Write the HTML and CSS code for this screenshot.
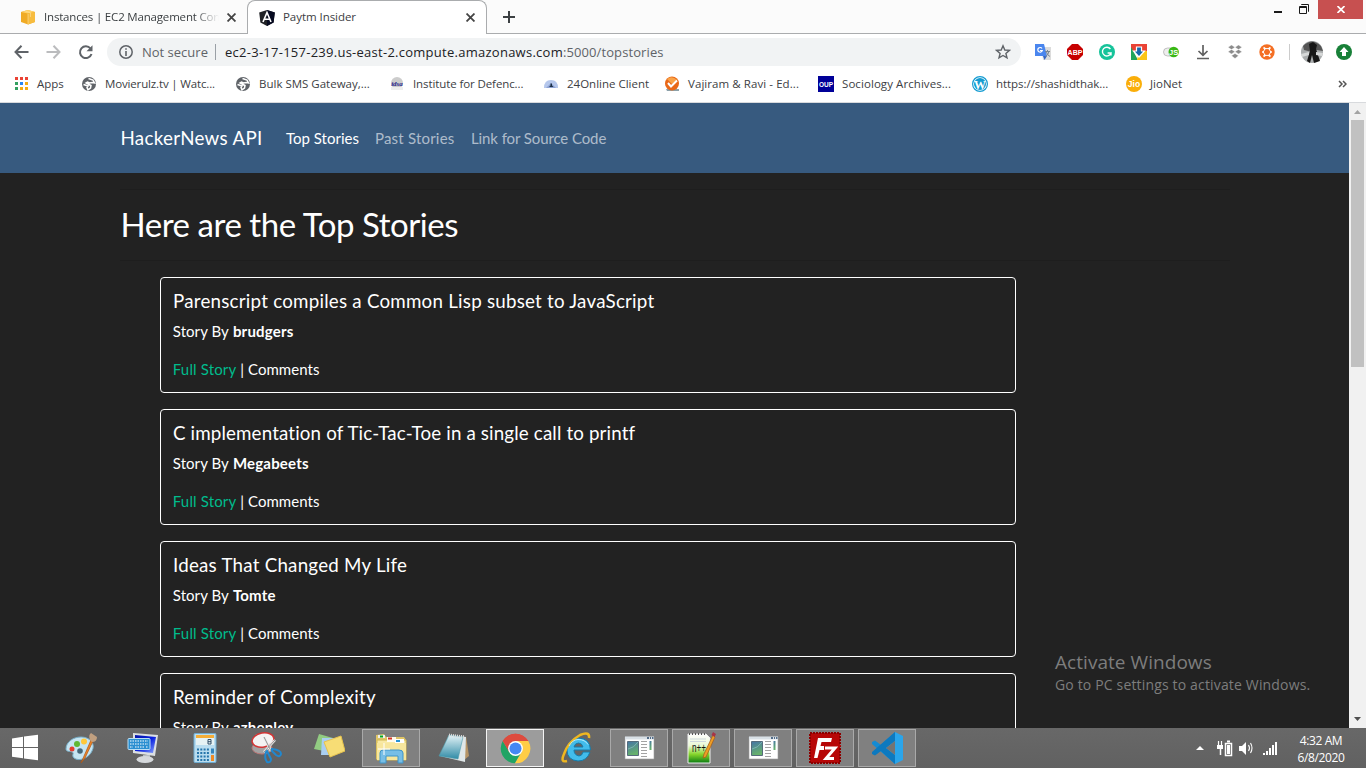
FILE: index.html
```
<!DOCTYPE html>
<html lang="en">
<head>
<meta charset="utf-8">
<title>Paytm Insider</title>
<link rel="stylesheet" href="styles.css">
</head>
<body>
<svg width="0" height="0" class="defs">
  <defs>
    <linearGradient id="pic" x1="0" y1="0" x2="0.3" y2="1"><stop offset="0" stop-color="#4574a6"/><stop offset="1" stop-color="#68b36c"/></linearGradient>
    <linearGradient id="pad" x1="0" y1="0" x2="0" y2="1"><stop offset="0" stop-color="#e4f3f7"/><stop offset="1" stop-color="#2f8ba6"/></linearGradient>
    <linearGradient id="npp" x1="0" y1="0" x2="0" y2="1"><stop offset="0" stop-color="#fff"/><stop offset=".4" stop-color="#eaf9d5"/><stop offset=".7" stop-color="#86d52b"/><stop offset="1" stop-color="#087a11"/></linearGradient>
    <linearGradient id="screen" x1="0" y1="0" x2="1" y2="1"><stop offset="0" stop-color="#0615a8"/><stop offset=".5" stop-color="#0920df"/><stop offset="1" stop-color="#8ba5ff"/></linearGradient>
    <symbol id="globe" viewBox="0 0 16 16"><circle cx="8" cy="8" r="7" fill="#5f6368"/><path d="M7.500 2.500L12 4l1.500 3-2-.5-3 .5-2-1L5 7l3 1.500 2 1-.5 2.500L7 13.800 6 11.500 7 10 2.500 8.500" fill="none" stroke="#fff" stroke-width="1.500"/></symbol>
    <symbol id="window" viewBox="0 0 32 32"><path d="M2 5h29v22H2z" fill="#fff" stroke="#9a9a9a" stroke-width=".6"/><path d="M2 4.500h29v3H2z" fill="#d8e0e6"/><path d="M24 5h2v2h-2zM27 5h1v2h-1zM29 5h1.500v2H29z" fill="#526c88"/><path d="M4.500 9.500h11v14h-11z" fill="url(#pic)" stroke="#566c7c"/><path d="M5 17q6-1 10-7" fill="none" stroke="#8fc0c3" opacity=".7"/><path d="M18 9.500h6m-6 3h6m-6 3h6m-6 3h6m-6 3h6m-6 3h6" stroke="#a3a3a3"/><path d="M26.500 9h2v9h-2z" fill="url(#pic)"/></symbol>
  </defs>
</svg>
<header class="browser">
  <div class="tabs">
    <div class="tab">
      <svg width="16" height="16" viewBox="0 0 16 16"><path d="M1 3l7-2 7 2v10l-7 2.500L1 13z" fill="#f0ab25"/><path d="M1 3l7-2 7 2-7 1.500z" fill="#ffd36b"/><path d="M8 4.500L15 3v10l-7 2.500z" fill="#f7bc3f"/><path d="M5.500 2l5 2v4M8 5v10" stroke="#fde1a0" stroke-width=".6" fill="none"/></svg>
      <span class="tab-title t-ec2">Instances | EC2 Management Con</span>
      <svg class="close" width="9" height="9" viewBox="0 0 8 8"><path d="M.5.5l7 7m0-7l-7 7" stroke="#444" stroke-width="1.600"/></svg>
    </div>
    <div class="tab active">
      <svg width="16" height="16" viewBox="0 0 16 16"><path d="M8 0l7.800 2.500-1.200 10L8 16l-6.600-3.500L.200 2.500z" fill="#202226"/><path d="M8 0l7.800 2.500-1.200 10L8 16z" fill="#060a20"/><path d="M4 12l4-9.500L12 12M5.600 9.300h4.800" stroke="#fff" stroke-width="1.600" fill="none"/></svg>
      <span class="tab-title t-paytm">Paytm Insider</span>
      <svg class="close" width="9" height="9" viewBox="0 0 8 8"><path d="M.5.5l7 7m0-7l-7 7" stroke="#444" stroke-width="1.600"/></svg>
    </div>
    <div class="tab-rest">
      <svg class="plus" width="12" height="12" viewBox="0 0 12 12"><path d="M6 0v12M0 6h12" stroke="#3c4043" stroke-width="2"/></svg>
      <div class="win-controls">
        <svg width="48" height="20" viewBox="0 0 48 20"><path d="M2 11h8v2H2z" fill="#1a1a1a"/><path d="M27.500 6.500h7v7h-7zM27 7.500h8" stroke="#1a1a1a" fill="none"/><path d="M29.500 5V4.500h7v7H36" stroke="#1a1a1a" fill="none"/></svg>
        <div class="win-close"><svg width="8" height="7" viewBox="0 0 8 7"><path d="M.5 0l7 7m0-7l-7 7" stroke="#fff" stroke-width="1.700"/></svg></div>
      </div>
    </div>
  </div>
  <div class="toolbar">
    <svg class="nav-icons" width="94" height="16" viewBox="0 0 94 16"><path d="M15.500 8H2.500m6-6.300L2.500 8l6 6.300" stroke="#5f6368" stroke-width="2" fill="none"/><path d="M33.500 8h13m-6-6.300l6 6.300-6 6.300" stroke="#bbbcbe" stroke-width="2" fill="none"/><path d="M77.500 4.500A5.900 5.900 0 1 0 78.500 10" stroke="#5f6368" stroke-width="2" fill="none"/><path d="M79.500 1.200v6h-6z" fill="#5f6368"/></svg>
    <div class="omnibox">
      <svg width="14" height="14" viewBox="0 0 14 14"><circle cx="7" cy="7" r="6.200" fill="none" stroke="#5f6368" stroke-width="1.500"/><path d="M6.200 3.200h1.600v1.600H6.200zM6.200 6h1.600v5H6.200z" fill="#5f6368"/></svg>
      <span class="secure">Not secure</span>
      <span class="url"><b>ec2-3-17-157-239.us-east-2.compute.amazonaws.com</b><i>:5000/topstories</i></span>
      <svg class="star" width="16" height="16" viewBox="0 0 16 16"><path d="M8 1.800l1.800 4.200 4.600.4-3.500 3 1.100 4.500-4-2.400-4 2.400 1.100-4.500-3.500-3 4.600-.4z" fill="none" stroke="#5f6368" stroke-width="1.400"/></svg>
    </div>
    <div class="extensions">
      <svg width="16" height="16" viewBox="0 0 16 16"><path d="M6 3h10v13H8z" fill="#dcdcdc"/><path d="M0 0h9l3 12H0z" fill="#4a86ee"/><path d="M8 12h4l-2.500 4z" fill="#3265c5"/><path d="M7 4.500A2.300 2.300 0 1 0 7.300 6.500H5" stroke="#fff" stroke-width="1.200" fill="none"/><path d="M10 7.500h5M12.500 6v1.500M14 7.500q-1 4-3.500 5M11.500 8q.5 3 3.500 4.500" stroke="#7a8795" fill="none"/></svg>
      <svg width="16" height="16" viewBox="0 0 16 16"><path d="M5 0h6l5 5v6l-5 5H5l-5-5V5z" fill="#c70000"/><text x="8" y="11" text-anchor="middle" class="abp">ABP</text></svg>
      <svg width="16" height="16" viewBox="0 0 16 16"><circle cx="8" cy="8" r="8" fill="#16c39a"/><path d="M11.400 5A4.400 4.400 0 1 0 12 9H8.600M12 8.500v3" stroke="#fff" stroke-width="1.400" fill="none"/></svg>
      <svg width="16" height="16" viewBox="0 0 16 16"><path d="M0 0h16v8H0z" fill="#ea4335"/><path d="M0 3l7 13H0z" fill="#20a35b"/><path d="M8 7h8v9H6z" fill="#fbc516"/><path d="M5.500 3h5v4h3L8 13 2.500 7h3z" fill="#1767aa" stroke="#fff" stroke-width="1.200"/></svg>
      <svg width="16" height="16" viewBox="0 0 16 16"><rect x=".5" y="4" width="11" height="8" rx="4" fill="#eee" stroke="#aaa" stroke-width=".7"/><circle cx="10.700" cy="8" r="5.200" fill="#39b814"/><text x="10.700" y="10.700" text-anchor="middle" class="js">JS</text></svg>
      <svg width="16" height="16" viewBox="0 0 16 16"><path d="M8 1v10M3.500 7L8 11.300 12.500 7M2 14.500h12" stroke="#606060" stroke-width="1.700" fill="none"/></svg>
      <svg width="16" height="16" viewBox="0 0 16 16"><path d="M4.500 1L8 3.300 4.500 5.500 1 3.300zM11.500 1L15 3.300l-3.500 2.200L8 3.300zM4.500 5.500L8 7.700l-3.500 2.200L1 7.700zM11.500 5.500L15 7.700l-3.500 2.200L8 7.700zM8 9.500l3.500 2.300L8 14.500l-3.500-2.700z" fill="#8b8b8b" stroke="#fff" stroke-width=".4"/></svg>
      <svg width="16" height="16" viewBox="0 0 16 16"><circle cx="8" cy="8" r="7.700" fill="#f46f24"/><path d="M6 4.600h4L11.700 8 10 11.400H6L4.300 8z" fill="none" stroke="#fff" stroke-width="1"/><path d="M4.500 3.500l2 1.500M11.500 3.500l-2 1.500M4.500 12.500l2-1.500M11.500 12.500l-2-1.500M3 8h2M11 8h2" stroke="#fff" stroke-width="1.600"/><circle cx="8" cy="8" r="2.200" fill="#f46f24"/></svg>
    </div>
    <div class="tool-sep"></div>
    <svg class="avatar" width="22" height="22" viewBox="0 0 22 22"><circle cx="11" cy="11" r="11" fill="#a9acad"/><path d="M2 5Q11-4 20 5l2 5-6-1-5 2-8-2z" fill="#555"/><path d="M8 3l4-2 4 3-1 4 4 12-6 2-2-8-2 8-3-2 3-10z" fill="#171717"/><path d="M0 13l8-2v3l-7 2zM15 11l7 1-1 3-6-1z" fill="#d7d9d9"/></svg>
    <svg width="16" height="16" viewBox="0 0 16 16"><circle cx="8" cy="8" r="8" fill="#188038"/><path d="M8 3l4.500 5H10v4H6V8H3.500z" fill="#fff"/></svg>
  </div>
  <nav class="bookmarks">
    <div class="bm apps"><svg width="16" height="16" viewBox="0 0 16 16"><path d="M1 1h3v3H1zM6 1h3v3H6zM11 1h3v3h-3z" fill="#ea4335"/><path d="M1 6h3v3H1zM1 11h3v3H1z" fill="#34a060"/><path d="M6 6h3v3H6z" fill="#2787f5"/><path d="M11 6h3v3h-3zM6 11h3v3H6zM11 11h3v3h-3z" fill="#f5ac13"/></svg><span>Apps</span></div>
    <div class="bm"><svg width="16" height="16"><use href="#globe"/></svg><span class="b-mov">Movierulz.tv | Watc...</span></div>
    <div class="bm"><svg width="16" height="16"><use href="#globe"/></svg><span class="b-sms">Bulk SMS Gateway,...</span></div>
    <div class="bm"><svg width="16" height="16" viewBox="0 0 16 16"><circle cx="8" cy="7" r="6" fill="#ccc"/><path d="M2 11h12v3H2z" fill="#eee"/><text x="8" y="9.500" text-anchor="middle" class="idsa">idsa</text></svg><span class="b-idsa">Institute for Defenc...</span></div>
    <div class="bm short"><svg width="16" height="16" viewBox="0 0 16 16"><path d="M1 12Q1 4 8 4t7 8z" fill="#b5c7ec"/><path d="M3 12l5-5 5 5z" fill="#8ea3d4"/><path d="M6 11l1.500-1.500V7.500h1.500v2L10.500 11z" fill="#1d3047"/></svg><span class="b-24">24Online Client</span></div>
    <div class="bm"><svg width="16" height="16" viewBox="0 0 16 16"><path d="M2 13h13v2H3z" fill="#8ba1aa"/><circle cx="8" cy="7.500" r="7" fill="#e96818"/><path d="M3 3q5-4 10 1l-5 4z" fill="#f9a348"/><path d="M4 7l3 3.500 6-6" fill="none" stroke="#fff" stroke-width="2"/></svg><span class="b-vaj">Vajiram &amp; Ravi - Ed...</span></div>
    <div class="bm"><svg width="16" height="16" viewBox="0 0 16 16"><path d="M0 0h16v16H0z" fill="#000098"/><text x="8" y="11" text-anchor="middle" textLength="14" lengthAdjust="spacingAndGlyphs" class="oup">OUP</text></svg><span class="b-soc">Sociology Archives...</span></div>
    <div class="bm"><svg width="16" height="16" viewBox="0 0 16 16"><circle cx="8" cy="8" r="7.400" fill="#fff" stroke="#149bd1" stroke-width="1.200"/><circle cx="8" cy="8" r="6" fill="#149bd1"/><text x="8" y="12.500" text-anchor="middle" class="wp">W</text></svg><span class="b-wp">https://shashidthak...</span></div>
    <div class="bm"><svg width="16" height="16" viewBox="0 0 16 16"><circle cx="8" cy="8" r="8" fill="#faae0a"/><text x="8" y="11" text-anchor="middle" class="jio">Jio</text></svg><span class="b-jio">JioNet</span></div>
    <svg class="more" width="9" height="8" viewBox="0 0 9 8"><path d="M1 1l3 3-3 3m4-6l3 3-3 3" fill="none" stroke="#555" stroke-width="1.500"/></svg>
  </nav>
</header>
<div class="viewport">
  <main class="page">
    <nav class="navbar"><div class="container navin"><a class="brand">HackerNews API</a><a class="link on">Top Stories</a><a class="link past">Past Stories</a><a class="link src">Link for Source Code</a></div></nav>
    <div class="container">
      <hr><h1>Here are the Top Stories</h1><hr>
      <section class="stories">
        <article class="card"><h2 class="c1">Parenscript compiles a Common Lisp subset to JavaScript</h2><p>Story By <b>brudgers</b></p><p class="acts"><a>Full Story</a> | Comments</p></article>
        <article class="card"><h2 class="c2">C implementation of Tic-Tac-Toe in a single call to printf</h2><p>Story By <b>Megabeets</b></p><p class="acts"><a>Full Story</a> | Comments</p></article>
        <article class="card"><h2 class="c3">Ideas That Changed My Life</h2><p>Story By <b>Tomte</b></p><p class="acts"><a>Full Story</a> | Comments</p></article>
        <article class="card"><h2 class="c4">Reminder of Complexity</h2><p>Story By <b>azhenley</b></p></article>
      </section>
    </div>
  </main>
  <div class="scrollbar"><svg width="7" height="4" viewBox="0 0 7 4"><path d="M0 4L3.500 0 7 4z" fill="#a3a3a3"/></svg><div class="thumb"></div><svg class="down" width="7" height="4" viewBox="0 0 7 4"><path d="M0 0h7L3.500 4z" fill="#505050"/></svg></div>
  <div class="watermark"><div class="w1">Activate Windows</div><div class="w2">Go to PC settings to activate Windows.</div></div>
</div>
<footer class="taskbar">
  <div class="start"><svg width="28" height="28" viewBox="0 0 28 28"><path d="M1 4.500l11-1.700V13H1zM13 2.600L27 .8V13H13zM1 14h11v10.300L1 22.700zM13 14h14v12.300L13 24.500z" fill="#fff"/></svg></div>
  <div class="task"><svg width="32" height="32" viewBox="0 0 32 32"><path d="M1 17C1 10 8 5 16 5c9 0 15 7 11 14-3 7-13 11-18 7-3-3 1-5-2-6-2-1-6 0-6-3z" fill="#c6e5f2" stroke="#78afc9"/><circle cx="7" cy="17" r="2.500" fill="#e53e30"/><circle cx="12" cy="12" r="3" fill="#61b833"/><circle cx="19" cy="9.500" r="3" fill="#ffc83a"/><circle cx="15" cy="19" r="2.800" fill="#456779"/><path d="M26 8L16 31l4-5 8-17z" fill="#ee8424" stroke="#a95518" stroke-width=".7"/><path d="M25 8q-2-5 1-7l6 4q0 5-5 5z" fill="#c1a080"/></svg></div>
  <div class="task"><svg width="32" height="32" viewBox="0 0 32 32"><path d="M6 1l25 2-3 21L6 21z" fill="#dce0e3"/><path d="M8 3l21 2-3 16L8 19z" fill="url(#screen)"/><path d="M16 23h7v4h-7z" fill="#b7bdc2"/><ellipse cx="18" cy="27.500" rx="8.500" ry="3.500" fill="#d6d9dc"/><rect x="1" y="6.500" width="22" height="11" rx="1" fill="#2a8fd1" stroke="#badff5"/><path d="M3 9h18M3 12h18M3 15h3m2 0h9m2 0h2" stroke="#fff" stroke-width="1.200" stroke-dasharray="1.500 1"/></svg></div>
  <div class="task"><svg width="32" height="32" viewBox="0 0 32 32"><rect x="5" y="1.500" width="22" height="29" rx="1" fill="#b9ddf0" stroke="#6eabd0"/><path d="M7 3h18v3H7z" fill="#f4ad38"/><path d="M7 6h18v7H7z" fill="#e6f2f4"/><path d="M19 7.500h3v4.500h-3zM19 9.700h3" fill="none" stroke="#33516b"/><path d="M8 17.500h12M8 21h12M8 24.500h12M8 28h12" stroke="#2675aa" stroke-width="2" stroke-dasharray="2 1.300"/><path d="M22 16.500h3v5h-3z" fill="#3485bd"/><path d="M22 23h3v6h-3z" fill="#ef8a26"/></svg></div>
  <div class="task"><svg width="32" height="32" viewBox="0 0 32 32"><ellipse cx="11" cy="16" rx="10" ry="6" fill="#a3a3a3" stroke="#bd7777"/><ellipse cx="12" cy="8" rx="11" ry="7" transform="rotate(-10 12 8)" fill="#f4f4f4" stroke="#d33535" stroke-width="1.500"/><path d="M13 5l7 14M24 8L13 20" stroke="#eee" stroke-width="2.500"/><path d="M13 5l7 14M24 8L13 20" stroke="#777" stroke-width=".8"/><path d="M21 17q9 1 9 5-1 4-5 1l-4-4zM16 19l4 8q0 4-4 3-3-4-1-10z" fill="none" stroke="#2088d0" stroke-width="2"/></svg></div>
  <div class="task"><svg width="32" height="32" viewBox="0 0 32 32"><path d="M6 2l14 4-4 14L1 17z" fill="#92cc82"/><path d="M9 6h14v17H8z" fill="#a9cef1"/><path d="M11 10l17-6 4 15-15 6z" fill="#f7dd75" stroke="#e7c34e"/></svg></div>
  <div class="task open"><svg width="34" height="34" viewBox="0 0 34 34"><path d="M2 28V4l8-1 2 3h18l2 3v20z" fill="#dfc567"/><path d="M4 4h7v3H4z" fill="#eee"/><path d="M6 4.500h3v2H6z" fill="#05a81c"/><path d="M3 9h29v20H3z" fill="#f8e9a5" stroke="#d3b853"/><path d="M13 6h9v5h-9z" fill="#fffbed"/><path d="M14 6.500h4v2h-4z" fill="#d63325"/><path d="M21 8h9v5h-9z" fill="#fff"/><path d="M22 9h4v2h-4z" fill="#2792d2"/><path d="M3 12h29v17H3z" fill="#f7e69d"/><path d="M6 32V22q0-3 3-3h16q4 0 4 3v10h-5v-7H12v7z" fill="#77bee6" stroke="#3e94c8"/><path d="M10 12v12M4 18h12" stroke="#fff"/></svg></div>
  <div class="task"><svg width="32" height="32" viewBox="0 0 32 32"><path d="M29 4l3 20-5 4z" fill="#b69465"/><path d="M12 3l17 2-1 25L3 24z" fill="#e0e7e8"/><path d="M12 3l14 2-5 22-19-3z" fill="url(#pad)" stroke="#4f9cad" stroke-width=".6"/><path d="M12 3l16 2" stroke="#ddd" stroke-width="3" stroke-dasharray="1 1"/></svg></div>
  <div class="task open current"><svg width="31" height="31" viewBox="1 1 46 46"><path d="M24 24L5 13A22 22 0 0 1 43 13H24z" fill="#dd4b3e"/><path d="M43 13A22 22 0 0 1 23 46L33 29 24 13z" fill="#ffcd46"/><path d="M5 13A22 22 0 0 0 23 46L33 29 15 29z" fill="#20a464"/><path d="M5 13l10 17 9-17h19A22 22 0 0 0 5 13z" fill="#dd4b3e"/><circle cx="24" cy="24" r="11" fill="#fff"/><circle cx="24" cy="24" r="9" fill="#4587f2"/></svg></div>
  <div class="task"><svg width="32" height="32" viewBox="0 0 32 32"><path d="M29 20Q26 29 17 29 6 28 6 18 7 7 17 6q12 0 12.500 12H13q0 5 5 6 3 0 4-4zM13 15h9q-1-4-4.500-4T13 15z" fill="#42bceb" stroke="#147dac"/><path d="M6 29q-7 2-3-7Q7 10 19 3q10-4 9 3" fill="none" stroke="#efb720" stroke-width="2.500"/><path d="M8 14q3-6 9-6.500 7 0 10 5" fill="none" stroke="#b2eafb"/></svg></div>
  <div class="task open"><svg width="32" height="32"><use href="#window"/></svg></div>
  <div class="task open"><svg width="32" height="32" viewBox="0 0 32 32"><path d="M3 2h18l4 4v25H3z" fill="url(#npp)" stroke="#eee"/><path d="M4 2h17" stroke="#555" stroke-width="2" stroke-dasharray="1 2"/><path d="M5 7h16M5 9.500h16" stroke="#ced7dc"/><text x="7" y="19.500" class="nppt" textLength="14" lengthAdjust="spacingAndGlyphs">n++</text><path d="M28 3l2 2-9 20-3 1 1-4z" fill="#ed9e26" stroke="#a35818" stroke-width=".7"/><path d="M28 0l3 2-1.500 3-3-2z" fill="#a73447"/></svg></div>
  <div class="task open"><svg width="32" height="32"><use href="#window"/></svg></div>
  <div class="task open"><svg width="32" height="32" viewBox="0 0 32 32"><rect x="1" y="1" width="30" height="30" fill="#b70707" stroke="#8c0000" stroke-width="2" stroke-dasharray="2 1"/><path d="M5 26L9 6h14l-1 4H12.500l-1 4H20l-1 4h-8.500l-2 8z" fill="#fff"/><path d="M15 16h11l-9 10h7" fill="none" stroke="#b70707" stroke-width="6"/><path d="M16 16h10l-9 10.500h8" fill="none" stroke="#fff" stroke-width="3"/></svg></div>
  <div class="task open"><svg width="32" height="32" viewBox="0 0 32 32"><path d="M24 0L10 13 4 8.500 1 10v2l23 20z" fill="#168bd2"/><path d="M24 32L10 19l-6 4.500L1 22v-2L24 0z" fill="#0d79bf"/><path d="M24 0l8 4v24l-8 4V9L15 16l9 7z" fill="#2aa5eb"/><path d="M24 9v14l-9-7z" fill="#747474"/></svg></div>
  <div class="tray">
    <svg width="82" height="18" viewBox="0 0 82 18"><path d="M0 11L4 7 8 11z" fill="#fff"/><g stroke="#fff" fill="none"><path d="M22.500 2v4m3-4v4" stroke-width="1.200"/><path d="M24.500 10v6" stroke-width="1.500"/><path d="M29.500 4.500h6v12h-6z" stroke-width="1.500"/><path d="M31 2.500h3" stroke-width="2"/><path d="M52.500 6q2 3 0 6m2-8q3 5 0 10" stroke-width="1.100"/></g><path d="M21 6h6v4h-6zM31 6h3v9h-3zM43 7h3l4-4v13l-4-4h-3zM67 14h2v2h-2zM70 12h2v4h-2zM73 9h2v7h-2zM76 6h2v10h-2zM79 3h2v13h-2z" fill="#fff"/></svg>
    <div class="clock"><div class="time">4:32 AM</div><div class="date">6/8/2020</div></div>
  </div>
</footer>
</body>
</html>
```
FILE: styles.css
```
* { box-sizing: border-box; }
html, body { margin: 0; height: 100%; overflow: hidden; }
body { width: 1366px; height: 768px; display: flex; flex-direction: column; font-family: "Open Sans", "Noto Sans", sans-serif; background: #222; }
svg { display: block; flex: none; }
.defs { position: absolute; }
.browser { height: 103px; background: #fff; border-bottom: 1px solid #d8dadd; color: #3c4043; flex: none; }
.tabs { display: flex; height: 34px; background: #fbfbfb; }
.tab { width: 247px; border-bottom: 1px solid #aaacae; display: flex; align-items: center; padding: 1px 11px 0 20px; gap: 8px; font-size: 11.500px; }
.tab-title { flex: 1; white-space: nowrap; overflow: hidden; padding-bottom: 2px; }
.t-ec2 { letter-spacing: -.18px; -webkit-mask-image: linear-gradient(90deg, #000 86%, transparent); }
.t-paytm { letter-spacing: -.05px; }
.tab.active { width: 240px; border: 1px solid #aaacae; border-bottom: 0; border-radius: 8px 8px 0 0; background: #fff; padding: 0 11px 0 11px; }
.tab-rest { flex: 1; display: flex; justify-content: space-between; border-bottom: 1px solid #aaacae; }
.plus { margin: 11px 0 0 16px; }
.win-controls { display: flex; }
.win-controls > svg { margin-right: -2px; }
.win-close { width: 45px; height: 19px; background: #c75050; margin-right: 3px; display: flex; align-items: center; justify-content: center; }
.toolbar { height: 36px; display: flex; align-items: center; }
.nav-icons { margin-left: 13px; }
.omnibox { width: 914px; height: 28px; background: #f1f3f4; border-radius: 14px; display: flex; align-items: center; padding: 0 10px 0 12px; font-size: 13px; }
.secure { color: #5f6368; margin-left: 9px; padding-right: 8px; border-right: 1px solid #9aa0a6; line-height: 16px; width: 74px; white-space: nowrap; letter-spacing: 0; }
.url { margin-left: 9px; flex: 1; white-space: nowrap; }
.url b { color: #202124; font-weight: 400; letter-spacing: .26px; }
.url i { color: #5f6368; font-style: normal; letter-spacing: .1px; }
.extensions { display: flex; gap: 16px; margin-left: 14px; }
.tool-sep { width: 1px; height: 16px; background: #ccc; margin: 0 11px 0 14px; }
.avatar { margin-right: 13px; }
.abp { font: bold 7px "Liberation Sans", sans-serif; fill: #fff; }
.js { font: bold 7.500px "Liberation Sans", sans-serif; fill: #fff; }
.bookmarks { display: flex; align-items: center; height: 28px; padding-left: 14px; font-size: 11.500px; }
.bm { width: 154px; display: flex; gap: 8px; align-items: center; white-space: nowrap; }
.bm span { padding-bottom: 2px; }
.bm.apps { width: 67px; gap: 7px; }
.bm.short { width: 121px; }
.b-mov { letter-spacing: -.15px; }
.b-idsa { letter-spacing: -.1px; }
.b-vaj, .b-soc { letter-spacing: .07px; }
.b-wp { letter-spacing: -.05px; }
.more { margin-left: 58px; }
.idsa { font: italic bold 7px "Liberation Serif", serif; fill: #232389; }
.oup { font: bold 8px "Liberation Sans", sans-serif; fill: #fff; }
.wp { font: bold 12px "Liberation Serif", serif; fill: #fff; }
.jio { font: bold 8.500px "Liberation Sans", sans-serif; fill: #fff; }
.viewport { position: relative; height: 625px; flex: none; display: flex; overflow: hidden; }
.page { width: 1349px; font-family: Lato, sans-serif; color: #fff; font-size: 15px; }
.navbar { background: #375a7f; height: 70px; display: flex; }
.container { width: 1140px; margin: 0 auto; padding: 0 15px; }
.navin { display: flex; align-items: center; padding-left: 16px; }
.link { color: rgba(255,255,255,.6); margin-right: 16px; white-space: nowrap; }
.link.on { color: #fff; width: 73px; }
.link.past { width: 80px; letter-spacing: .2px; }
.link.src { letter-spacing: -.1px; }
.brand { font-size: 18.750px; margin-right: 24.500px; width: 141px; white-space: nowrap; letter-spacing: .3px; padding-bottom: 2px; }
hr { margin: 16px 0; border: 0; border-top: 1px solid rgba(0,0,0,.1); }
h1 { margin: -1px 0 17px 1px; font-size: 33px; font-weight: 400; line-height: 38px; letter-spacing: -.45px; }
.stories { padding-left: 40px; }
.card { width: 856px; height: 116px; border: 1px solid #fff; border-radius: 4px; margin-bottom: 16px; padding: 12px; }
h2 { font-size: 18.750px; line-height: 22px; font-weight: 400; margin: 0 0 8px; padding-left: .5px; white-space: nowrap; letter-spacing: .23px; }
.c2 { letter-spacing: .14px; }
p { margin: 0; line-height: 23px; padding-left: .3px; letter-spacing: .06px; }
p b { letter-spacing: .2px; margin-left: .5px; }
.acts { margin-top: 15px; }
.acts a { color: #00bc8c; letter-spacing: .15px; }
.scrollbar { width: 17px; background: #f1f1f1; display: flex; flex-direction: column; align-items: center; padding-top: 7px; }
.thumb { width: 13px; height: 247px; background: #c1c1c1; margin-top: 6px; }
.down { margin: auto 0 7px; }
.watermark { position: absolute; left: 1055px; top: 547px; color: #7d7d7d; white-space: nowrap; }
.w1 { font-size: 19px; line-height: 24px; letter-spacing: .05px; }
.w2 { font-size: 14px; line-height: 21px; letter-spacing: .16px; }
.taskbar { height: 40px; flex: none; background: linear-gradient(#686868, #616161); display: flex; align-items: center; }
.start { width: 49px; padding-left: 11px; }
.task { width: 58px; height: 38px; margin-right: 4px; display: flex; align-items: center; justify-content: center; }
.task:nth-child(2) { margin-left: 3px; }
.open { border: 1px solid #a9a9a9; background: #808080; }
.current { border: 1px solid #f4f4f4; background: #9c9c9c; }
.nppt { font: 13px "Liberation Sans", sans-serif; fill: #111; }
.tray { margin-left: auto; display: flex; align-items: center; color: #fff; }
.clock { width: 88px; font-size: 12px; line-height: 17px; text-align: center; padding: 2px 2px 0 0; }
.clock div { letter-spacing: -.4px; }
```
